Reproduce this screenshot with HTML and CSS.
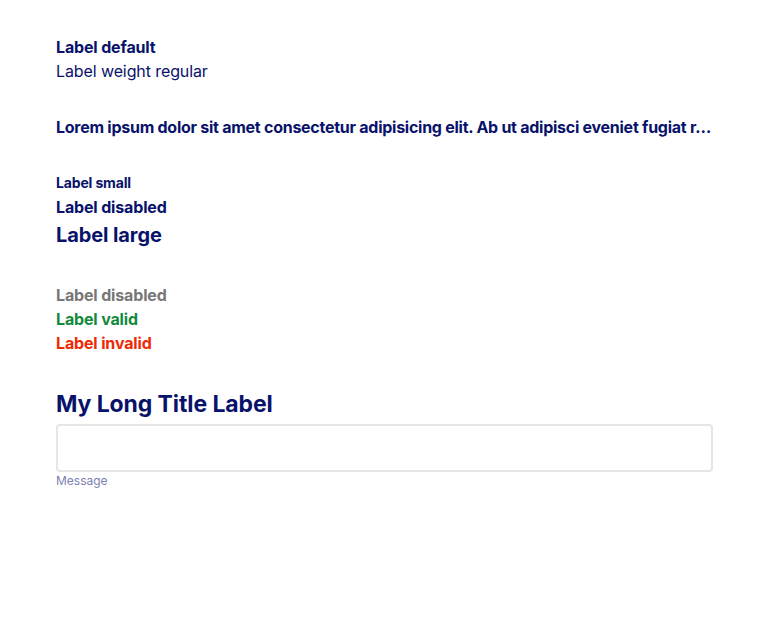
FILE: index.html
```html
<!DOCTYPE html>
<html lang="en">
<head>
<meta charset="utf-8">
<title>Labels</title>
<link rel="stylesheet" href="styles.css">
</head>
<body>
<main class="page">
  <section class="group">
    <div class="label">Label default</div>
    <div class="label regular">Label weight regular</div>
  </section>
  <section class="group">
    <div class="label truncate">Lorem ipsum dolor sit amet consectetur adipisicing elit. Ab ut adipisci eveniet fugiat r…</div>
  </section>
  <section class="group">
    <div class="label small">Label small</div>
    <div class="label">Label disabled</div>
    <div class="label large">Label large</div>
  </section>
  <section class="group">
    <div class="label disabled">Label disabled</div>
    <div class="label valid">Label valid</div>
    <div class="label invalid">Label invalid</div>
  </section>
  <section class="field">
    <label class="title" for="f1">My Long Title Label</label>
    <input class="input" id="f1" type="text">
    <div class="message">Message</div>
  </section>
</main>
</body>
</html>
```

FILE: styles.css
```css
html, body {
  margin: 0;
  background: #ffffff;
}
body {
  font-family: Inter, "Noto Sans", sans-serif;
  color: #08126b;
}
.page {
  padding: 35px 56px;
  display: flex;
  flex-direction: column;
  gap: 32px;
}
.group {
  display: flex;
  flex-direction: column;
}
.label {
  font-size: 16px;
  line-height: 24px;
  font-weight: 700;
  letter-spacing: -0.15px;
}
.regular {
  font-weight: 400;
  letter-spacing: -0.1px;
}
.truncate {
  white-space: nowrap;
  overflow: hidden;
  text-overflow: ellipsis;
  letter-spacing: -0.26px;
}
.small {
  font-size: 14px;
  line-height: 24px;
}
.large {
  font-size: 20px;
  line-height: 32px;
  letter-spacing: -0.1px;
}
.disabled { color: #777777; }
.valid { color: #138a3e; }
.invalid { color: #ee2a05; }
.field {
  display: flex;
  flex-direction: column;
  margin-top: 1px;
}
.title {
  font-size: 23px;
  line-height: 32px;
  font-weight: 700;
  letter-spacing: -0.1px;
  margin-bottom: 4px;
}
.input {
  box-sizing: border-box;
  height: 48px;
  width: 100%;
  margin: 0;
  border: 2px solid #e6e6e6;
  border-radius: 4px;
  background: #fff;
  font: inherit;
}
.message {
  margin-top: 1px;
  font-size: 12px;
  line-height: 16px;
  color: #7b80b3;
}
```
